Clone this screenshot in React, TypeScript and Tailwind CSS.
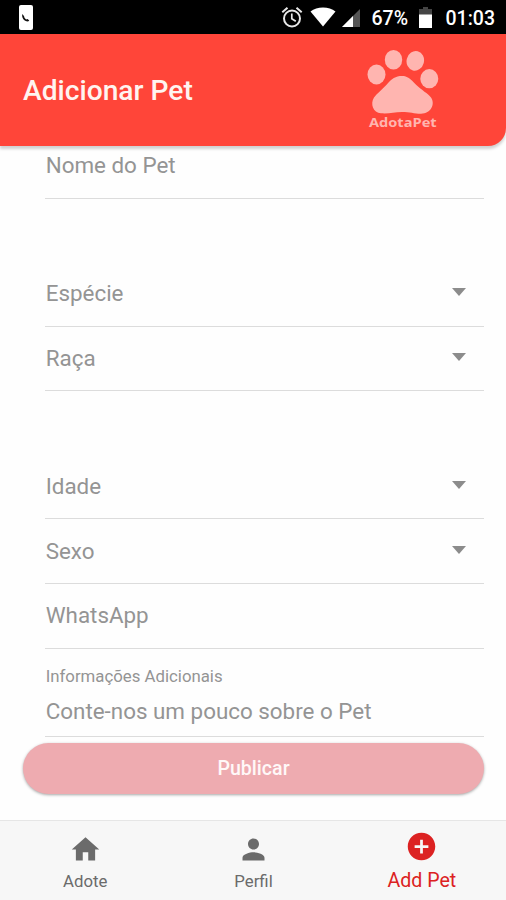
import { useState } from "react";

const StatusBar = () => (
  <div className="flex h-[34px] items-center justify-between bg-black pl-[19px] pr-[11px] text-white">
    <svg width="14" height="25" viewBox="0 0 14 25">
      <rect width="14" height="25" rx="2" fill="#fff" />
      <path
        d="M3.4 9c-1.1 3.4 1.4 7.3 5.6 7.6l1.3-1-1.8-1.7-1.3.5c-1.2-.7-2-1.9-2.1-3.1z"
        fill="#111"
      />
    </svg>
    <div className="flex items-center">
      <svg
        width="22"
        height="22"
        viewBox="0 0 22 22"
        fill="none"
        stroke="#e8e8e8"
        strokeWidth="2"
      >
        <circle cx="11" cy="12.5" r="8" />
        <path d="M1.3 6.2 6.5 1.8M20.7 6.2 15.5 1.8" />
        <path d="M10.8 7.5v5.3l4 2.5" strokeWidth="1.7" />
      </svg>
      <svg className="ml-[7px]" width="26" height="20" viewBox="0 0 26 20">
        <path
          d="M.5 4.5C4 1.8 8 .5 13 .5s9 1.3 12.5 4L13 19.5z"
          fill="#fff"
        />
      </svg>
      <svg
        className="ml-[6px] mt-[2px]"
        width="18"
        height="18"
        viewBox="0 0 18 18"
      >
        <path d="M18 0v18H0z" fill="#555" />
        <path d="M11 7v11H0z" fill="#fff" />
      </svg>
      <span className="ml-[12px] mt-[3px] w-[38px] whitespace-nowrap text-[19.5px] font-medium leading-[20px]">
        67%
      </span>
      <svg
        className="ml-[9px] mt-px"
        width="13"
        height="21"
        viewBox="0 0 13 21"
      >
        <path d="M4 0h5v2h4v6H0V2h4z" fill="#444" />
        <path d="M0 7.5h13V21H0z" fill="#fff" />
      </svg>
      <span className="ml-[14px] mt-[3px] text-[19.5px] font-medium leading-[20px]">
        01:03
      </span>
    </div>
  </div>
);

const Logo = () => (
  <div className="flex w-[72px] flex-col items-center text-[#ffb5b0]">
    <svg width="72" height="65" viewBox="0 0 72 65" fill="currentColor">
      <ellipse cx="9.5" cy="24.5" rx="9" ry="10" />
      <ellipse cx="26.5" cy="9.8" rx="8.7" ry="9.8" />
      <ellipse
        cx="48.3"
        cy="10.8"
        rx="8.7"
        ry="9.9"
        transform="rotate(14 48.3 10.8)"
      />
      <ellipse cx="62.3" cy="28.7" rx="9" ry="9.6" />
      <path d="M35 26C40.5 26 43 28.5 49.3 35C54.5 40 61 43.5 64 47.5C68.5 54 64 63.7 54 63.7C47 63.7 43 62 35 62S22 64 14 63.3C6 62.5 3 54 7 47.5C10 43.5 14.5 40 19.3 35C25 28.5 28.5 26 35 26Z" />
    </svg>
    <span className="mt-px origin-center scale-x-[1.22] font-['Open_Sans'] text-[12px] font-bold leading-[14px]">
      AdotaPet
    </span>
  </div>
);

const Field = ({
  label,
  select,
  className,
}: {
  label: string;
  select?: boolean;
  className: string;
}) => (
  <div
    className={`flex items-end justify-between border-b border-[#dcdcdc] pr-[18px] text-[22.4px] leading-[26px] text-[#949494] ${className}`}
  >
    <span className="pl-[0.7px]">{label}</span>
    {select && (
      <svg className="mb-[10px]" width="14" height="8" viewBox="0 0 14 8">
        <path d="M0 0h14L7 8z" fill="#8c8c8c" />
      </svg>
    )}
  </div>
);

const tabs = [
  { name: "Adote", path: "M10 20v-6h4v6h5v-8h3L12 3 2 12h3v8z" },
  {
    name: "Perfil",
    path: "M12 12c2.21 0 4-1.79 4-4s-1.79-4-4-4-4 1.79-4 4 1.79 4 4 4zm0 2c-2.67 0-8 1.34-8 4v2h16v-2c0-2.66-5.33-4-8-4z",
  },
  {
    name: "Add Pet",
    path: "M12 2C6.48 2 2 6.48 2 12s4.48 10 10 10 10-4.48 10-10S17.52 2 12 2zm5 11h-4v4h-2v-4H7v-2h4V7h2v4h4v2z",
  },
];

const App = () => {
  const [activeTab, setActiveTab] = useState("Add Pet");

  return (
    <div className="flex h-[900px] w-full flex-col overflow-hidden bg-[#fefefe] font-['Roboto',sans-serif]">
      <StatusBar />

      <header className="relative flex h-[112px] shrink-0 items-center justify-between rounded-br-[18px] bg-[#ff4539] pl-[23px] pr-[67px] shadow-[0_3px_3px_rgba(0,0,0,0.18)]">
        <h1 className="mt-[2px] text-[28.2px] font-medium leading-8 text-[#fff4f0]">
          Adicionar Pet
        </h1>
        <Logo />
      </header>

      <main className="flex grow flex-col pl-[23px] pr-[22px]">
        <div className="flex flex-col pl-[22px]">
          <Field label="Nome do Pet" className="h-[53px] pb-[20.5px]" />
          <Field label="Espécie" select className="mt-16 h-16 pb-[20.5px]" />
          <Field label="Raça" select className="h-16 pb-[19.5px]" />
          <Field label="Idade" select className="mt-16 h-16 pb-[19.5px]" />
          <Field label="Sexo" select className="h-[65px] pb-[19.5px]" />
          <Field label="WhatsApp" className="h-[65px] pb-[20.5px]" />
          <div className="flex h-[88px] flex-col border-b border-[#dcdcdc] pl-[0.7px] pt-[17px] text-[#949494]">
            <span className="text-[16.8px] leading-5">
              Informações Adicionais
            </span>
            <span className="mt-[12px] text-[22.4px] leading-[26px]">
              Conte-nos um pouco sobre o Pet
            </span>
          </div>
        </div>
        <button className="mt-[6px] h-[51px] rounded-full bg-[#eeabb0] text-[19.6px] font-medium text-[#fff8f8] shadow-[0_1px_3px_rgba(0,0,0,0.35)]">
          Publicar
        </button>
      </main>

      <nav className="grid h-[80px] shrink-0 grid-cols-3 border-t border-[#e6e6e6] bg-[#f7f7f7] pl-px">
        {tabs.map((tab) => (
          <button
            key={tab.name}
            onClick={() => setActiveTab(tab.name)}
            className={`flex flex-col items-center whitespace-nowrap ${
              activeTab === tab.name
                ? "gap-[6px] pt-[9px] text-[19.6px] text-[#dc2222]"
                : "gap-[3px] pt-[12px] text-[16.8px] text-[#6b6b6b]"
            }`}
          >
            <svg
              className="shrink-0"
              width="33"
              height="33"
              viewBox="0 0 24 24"
              fill="currentColor"
            >
              <path d={tab.path} />
            </svg>
            <span className="leading-6">{tab.name}</span>
          </button>
        ))}
      </nav>
    </div>
  );
};

export default App;
